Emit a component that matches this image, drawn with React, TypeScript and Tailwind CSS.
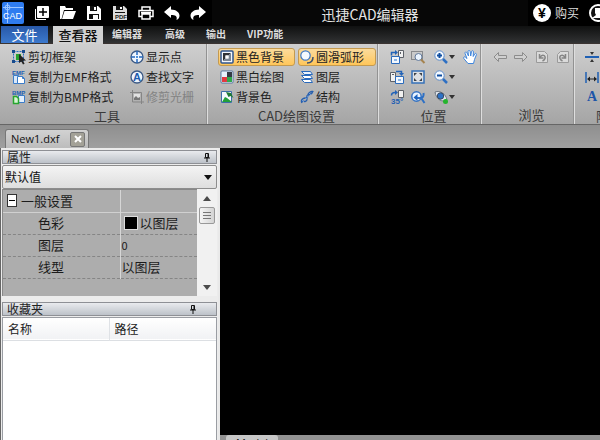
import type { ReactNode } from "react";

type IconProps = { children: ReactNode; className?: string };

function Icon({ children, className = "size-[14px]" }: IconProps) {
  return (
    <svg
      viewBox="0 0 14 14"
      fill="none"
      fontFamily="Liberation Sans, sans-serif"
      fontWeight="bold"
      className={`shrink-0 overflow-visible ${className}`}
      aria-hidden="true"
    >
      {children}
    </svg>
  );
}

const icons = {
  crop: (
    <Icon>
      <path d="M1.500 1.500h10v10h-10z" stroke="#2a6fc0" strokeDasharray="2 1" />
      <path d="M0 0h3v3H0zM10 0h3v3h-3zM0 10h3v3H0z" fill="#174a8c" />
      <path d="M4 4h5v6H4z" fill="#27a22c" />
      <path d="M7 4l7 6.500-3 .2 1.600 3-1.600.8-1.700-3L7 13z" fill="#222" />
    </Icon>
  ),
  emf: (
    <Icon>
      <text x="0" y="4.500" fontSize="6" fill="#1c5fb4">
        EMF
      </text>
      <path d="M1.500 5.500h5v8h-5z" fill="#d9e8fa" stroke="#3b7cc9" />
      <path d="M5.500 6.500h5l2 2v5h-7z" fill="#fff" stroke="#3b7cc9" />
      <path d="M10.500 6.500v2h2" stroke="#3b7cc9" />
    </Icon>
  ),
  bmp: (
    <Icon>
      <text x="0" y="4.500" fontSize="6" fill="#1c5fb4">
        BMP
      </text>
      <path d="M6.500 5.500h6v7h-6z" fill="#e3effc" stroke="#3b7cc9" />
      <path d="M1.500 6.500h3l2 2v5h-5z" fill="#d7f6d4" stroke="#28a62e" strokeWidth="1.500" />
    </Icon>
  ),
  points: (
    <Icon>
      <circle cx="7" cy="7" r="6" fill="#eef5fe" stroke="#3c5a86" strokeWidth="1.300" />
      <path d="M7 1v4M7 9v4M1 7h4M9 7h4" stroke="#2467bd" strokeWidth="1.500" />
      <path d="M6 6h2v2H6z" fill="#4d91dc" />
    </Icon>
  ),
  findText: (
    <Icon>
      <circle cx="7" cy="7" r="6" fill="#eef5fe" stroke="#3c5a86" strokeWidth="1.300" />
      <text x="7" y="11" textAnchor="middle" fontSize="11" fill="#1d5cae">
        A
      </text>
    </Icon>
  ),
  raster: (
    <Icon>
      <path d="M2.500 0v12H14M0 2.500h11.500V14" stroke="#858585" />
      <path d="M4 4h6v6H4z" fill="#e2e2e2" />
      <path d="M4 10V8l2-2 2 2 2-1v3z" fill="#777" />
    </Icon>
  ),
  blackBg: (
    <Icon>
      <rect x="1" y="1" width="12" height="12" rx="1" fill="#f4f7fb" stroke="#2f5590" strokeWidth="1.500" />
      <path d="M3 3h8L8.500 5.500h-3v3L3 11z" fill="#2f3136" />
      <path d="M11 3v8H3l2.500-2.500h3v-3z" fill="#7d8794" />
      <path d="M5.500 5.500h3v3h-3z" fill="#fff" />
    </Icon>
  ),
  blackWhite: (
    <Icon>
      <rect x="1" y="1" width="12" height="12" rx="1" fill="#fff" stroke="#52749f" />
      <path d="M7 2h5v5H7z" fill="#343b45" />
      <path d="M2 7h5v5H2z" fill="#e23a42" />
      <path d="M7 7h5v5H7z" fill="#31a94b" />
      <path d="M2 2h5v5H2z" fill="#e8f2fd" />
    </Icon>
  ),
  bgColor: (
    <Icon>
      <path d="M1.500 1.500h10v11h-10z" fill="#f2f7fd" stroke="#3d6ea8" />
      <path d="M2 12l3-5 2 1 5 4z" fill="#22a03a" />
      <path d="M6 2l5 1 2.500 5-3-2-2 1z" fill="#1f7a35" />
      <path d="M5 4.500l5 5" stroke="#fff" />
    </Icon>
  ),
  arc: (
    <Icon>
      <circle cx="5.500" cy="5.500" r="4.700" fill="#f5f9fe" stroke="#3f78c4" strokeWidth="1.200" />
      <path d="M13 7c0 3.500-2 6-6 6" stroke="#3a4f70" strokeWidth="1.500" />
    </Icon>
  ),
  layers: (
    <Icon>
      <path d="M1.500 9.500l3 3h8l-2-3z" fill="#fff" stroke="#2869bd" />
      <path d="M1.500 5.500l3 3h8l-2-3z" fill="#fff" stroke="#2869bd" />
      <path d="M1.500 1.500l3 3h8l-2-3z" fill="#e8f2fd" stroke="#2869bd" />
    </Icon>
  ),
  structure: (
    <Icon>
      <path d="M2 13c-2-4 2-5 4-5s1-3 3-5 4-2 4-1M1 10c4 3 6 1 6-1s-1-3 1-4 4 0 5-4" stroke="#275fae" strokeWidth="1.400" />
      <path d="M2 10l2 2M9 3l2 2M5 8l2 1M7 6l2 1" stroke="#6a9bd9" />
    </Icon>
  ),
  rotateLeft: (
    <Icon>
      <path d="M8.500.500h5v7h-5z" fill="#f1f1f1" stroke="#5d6168" />
      <path d="M10.500 2v2" stroke="#5d6168" />
      <path d="M1.500 6.500h8v7h-8z" fill="#f4f8fd" stroke="#2d6cbc" />
      <path d="M4 9h3v2H4z" fill="#8db6e7" />
      <path d="M1.500 5.500V2.500h4" stroke="#2263b8" strokeWidth="1.500" />
      <path d="M5 0l3 2.500L5 5z" fill="#2263b8" />
    </Icon>
  ),
  rotateRight: (
    <Icon>
      <path d="M.500 2.500h5v9h-5z" fill="#f1f1f1" stroke="#5d6168" />
      <path d="M2 4.500h2" stroke="#5d6168" />
      <path d="M5.500 6.500h8v7h-8z" fill="#f4f8fd" stroke="#2d6cbc" />
      <path d="M8 9h3v2H8z" fill="#8db6e7" />
      <path d="M6 1.500h5.500V4" stroke="#2263b8" strokeWidth="1.500" />
      <path d="M9 3h5l-2.500 3z" fill="#2263b8" />
    </Icon>
  ),
  rotateAngle: (
    <Icon>
      <path d="M8.500.500h5v7h-5z" fill="#f1f1f1" stroke="#5d6168" />
      <path d="M1.500 5.500C1.500 3.500 3 2.500 5 2.500" stroke="#2263b8" strokeWidth="1.500" />
      <path d="M5 0l3 2.500L5 5z" fill="#2263b8" />
      <text x="1" y="13.500" fontSize="8" fill="#1f5fb3">
        35°
      </text>
    </Icon>
  ),
  zoomWindow: (
    <Icon>
      <path d="M.500 1.500h11v8H.500z" stroke="#45494f" strokeDasharray="1 1" />
      <circle cx="7.500" cy="7" r="3.500" fill="#eaf4ff" stroke="#62799a" />
      <path d="M10 9.500l3.500 3.500" stroke="#a5834f" strokeWidth="2" />
    </Icon>
  ),
  fit: (
    <Icon>
      <rect x="1" y="1" width="12" height="12" fill="#dcdfe3" stroke="#3672b9" strokeWidth="1.500" />
      <path d="M3 3h3L3 6zM11 3v3L8 3zM3 11V8l3 3zM11 11H8l3-3z" fill="#3b4149" />
    </Icon>
  ),
  zoomBack: (
    <Icon>
      <circle cx="5.500" cy="6.500" r="4.700" fill="#eaf4ff" stroke="#3673c2" strokeWidth="1.500" />
      <path d="M10.500 8.500l3 4.500" stroke="#2d70c5" strokeWidth="2" />
      <path d="M5 8h4c3 0 4-2 3.500-5" stroke="#2d70c5" strokeWidth="2" />
      <path d="M6.500 4v7L2.500 7.500z" fill="#1c63bf" />
    </Icon>
  ),
  zoomIn: (
    <Icon>
      <circle cx="5.500" cy="5.500" r="4.700" fill="#f3f9ff" stroke="#5e8dca" />
      <path d="M3 5.500h5M5.500 3v5" stroke="#0f4da0" strokeWidth="2" />
      <path d="M9 9l4 4" stroke="#2d6fc3" strokeWidth="2.500" />
    </Icon>
  ),
  zoomOut: (
    <Icon>
      <circle cx="5.500" cy="5.500" r="4.700" fill="#f3f9ff" stroke="#5e8dca" />
      <path d="M3 5.500h5" stroke="#0f4da0" strokeWidth="2" />
      <path d="M9 9l4 4" stroke="#2d6fc3" strokeWidth="2.500" />
    </Icon>
  ),
  orbit: (
    <Icon>
      <path d="M1 2c5-2 11 2 12 8-5 3-11-1-12-8z" fill="#e4e9ef" stroke="#6e7680" />
      <circle cx="6.500" cy="6" r="3.200" fill="#2d72c6" stroke="#3c4c60" />
      <circle cx="11.500" cy="11.500" r="2.500" fill="#25b42d" />
    </Icon>
  ),
  hand: (
    <Icon>
      <path
        d="M5 13.500L.800 8.500c-.8-1.500 1-2.200 2-1L4 8.500 2 3.300c-.3-1.400 1.500-1.700 2-.4L5.500 6 5 1.500C5 .2 7 .2 7.200 1.500L7.700 6l.8-4.500c.3-1.200 2-1 1.900.3L10.200 6.500l1.600-2.700c.7-1 2-.2 1.600.9L11.500 9.500l-1 4z"
        fill="#fff"
        stroke="#3f86dd"
      />
    </Icon>
  ),
  back: (
    <Icon>
      <path d="M5.500 2.500L1 7l4.500 4.500v-3h8v-3h-8z" fill="#d0d0d0" stroke="#8c8c8c" />
    </Icon>
  ),
  forward: (
    <Icon>
      <path d="M8.500 2.500L13 7l-4.500 4.500v-3h-8v-3h8z" fill="#d0d0d0" stroke="#8c8c8c" />
    </Icon>
  ),
  pageBack: (
    <Icon>
      <path d="M1.500 1.500h8l3 3v8h-11z" fill="#dadada" stroke="#9a9a9a" />
      <path d="M4.500 4v4h4M5 7.500c2-4 6-2 5 1-.5 1.500-1.500 2-2.500 2.500" stroke="#858585" strokeWidth="1.500" />
    </Icon>
  ),
  pageForward: (
    <Icon>
      <path d="M12.500 1.500h-8l-3 3v8h11z" fill="#dadada" stroke="#9a9a9a" />
      <path d="M9.500 4v4h-4M9 7.500c-2-4-6-2-5 1 .5 1.500 1.500 2 2.500 2.500" stroke="#858585" strokeWidth="1.500" />
    </Icon>
  ),
  split: (
    <Icon>
      <path d="M0 7h14" stroke="#1f60b4" strokeWidth="2" />
      <path d="M5 2h4L7 5zM5 12h4L7 9z" fill="#333" />
    </Icon>
  ),
  distance: (
    <Icon>
      <path d="M1 2v11M13 2v11" stroke="#1f60b4" strokeWidth="1.500" />
      <path d="M3 9h8" stroke="#222" />
      <path d="M2 9l3-2.500v5zM12 9L9 6.500v5z" fill="#222" />
    </Icon>
  ),
};

function RibbonButton({
  icon,
  label,
  active,
  disabled,
}: {
  icon: ReactNode;
  label: string;
  active?: boolean;
  disabled?: boolean;
}) {
  return (
    <button
      disabled={disabled}
      className={`my-px flex h-[18px] items-center gap-[2px] rounded-[3px] border px-px text-xs leading-4 whitespace-nowrap ${
        active
          ? "border-[#c49a50] bg-linear-to-b from-[#fbdb9c] to-[#ffc658] text-[#222]"
          : "border-transparent text-[#222] disabled:text-[#838383]"
      }`}
    >
      {icon}
      {label}
    </button>
  );
}

function ToolButton({ icon, label, menu }: { icon: ReactNode; label: string; menu?: boolean }) {
  return (
    <button aria-label={label} className="flex h-5 items-center gap-px">
      {icon}
      {menu && (
        <svg viewBox="0 0 6 4" className="h-1 w-[6px]" aria-hidden="true">
          <path d="M0 0h6L3 4z" fill="#333" />
        </svg>
      )}
    </button>
  );
}

function Group({ title, className, children }: { title: string; className: string; children: ReactNode }) {
  return (
    <section
      className={`flex flex-col border-r border-r-[#dedede] pt-[3px] shadow-[inset_-1px_0_0_#929292] ${className}`}
    >
      <div className="h-[60px]">{children}</div>
      <h2 className="pl-[7px] text-center text-[13px] leading-[18px] whitespace-nowrap text-[#3a3a3a]">{title}</h2>
    </section>
  );
}

function Pin() {
  return (
    <svg viewBox="0 0 8 9" className="h-[9px] w-2" aria-hidden="true">
      <path d="M2.500.500h3v4h-3zM1 5h6M4 5v4M5 1v4" stroke="#111" fill="none" />
    </svg>
  );
}

function TitleBar() {
  return (
    <header className="flex h-[26px] shrink-0 items-center bg-[#070707] text-white">
      <div className="flex h-full w-[212px] shrink-0 items-center bg-black pl-[2px]">
        <svg viewBox="0 0 22 22" className="size-[22px]" aria-hidden="true">
          <rect width="22" height="22" rx="2" fill="#2f7cf0" />
          <path d="M1 5.500h20M5.500 1v20M3 5.500a2.500 2.500 0 105 0 2.500 2.500 0 10-5 0" stroke="#9cc5ff" fill="none" />
          <text x="1" y="17" fontSize="9" fill="#fff" fontFamily="Liberation Sans, sans-serif">
            CAD
          </text>
        </svg>
        <div className="ml-[10px] flex items-center gap-[10px]">
          <button aria-label="新建">
            <svg viewBox="0 0 16 16" className="size-4" fill="none">
              <rect x="3" y="1" width="12" height="12" rx="1" fill="#fff" />
              <path d="M1.500 4v10.500H12" stroke="#fff" />
              <path d="M9 3v8M5 7h8" stroke="#000" strokeWidth="1.500" />
            </svg>
          </button>
          <button aria-label="打开">
            <svg viewBox="0 0 16 16" className="size-4" fill="#fff">
              <path d="M0 14V1h5l1 2h7v2H4L1.500 14zM4.500 6H16l-3 8H2z" />
            </svg>
          </button>
          <button aria-label="保存">
            <svg viewBox="0 0 16 16" className="size-4">
              <path d="M1 1h11l3 3v11H1z" fill="#fff" />
              <path d="M4 1h7v5H4zM3 9h10v5H3z" fill="#111" />
              <path d="M8 2h2v3H8zM7 10h5v4H7z" fill="#fff" />
            </svg>
          </button>
          <button aria-label="保存为PDF">
            <svg viewBox="0 0 16 16" className="size-4">
              <path d="M1 1h11l3 3v11H1z" fill="#ddd" />
              <path d="M4 1h7v4H4zM3 7h10v1H3z" fill="#111" />
              <path d="M8 2h2v2H8z" fill="#fff" />
              <text x="3" y="14" fontSize="6" fontWeight="bold" fill="#222" fontFamily="Liberation Sans, sans-serif">
                PDF
              </text>
            </svg>
          </button>
          <button aria-label="打印">
            <svg viewBox="0 0 16 16" className="size-4" fill="none">
              <path d="M4 5V2h8v3M4 11.500H1V5.500h14v6h-3" stroke="#fff" strokeWidth="1.500" />
              <path d="M4 9h8v5H4zM3 7.500h10" stroke="#fff" strokeWidth="1.500" />
            </svg>
          </button>
          <button aria-label="撤销">
            <svg viewBox="0 0 16 16" className="size-4" fill="#fff">
              <path d="M0 7l7-6v3.500c5 0 8.500 3 8.500 6 0 2-1 3.500-3 4.500 1-4-1-5-5.500-5v3z" />
            </svg>
          </button>
          <button aria-label="重做">
            <svg viewBox="0 0 16 16" className="size-4" fill="#fff">
              <path d="M16 7L9 1v3.500c-5 0-8.500 3-8.500 6 0 2 1 3.500 3 4.500-1-4 1-5 5.500-5v3z" />
            </svg>
          </button>
        </div>
      </div>
      <h1 className="flex-1 pt-[2px] text-center text-sm leading-5 text-[#e4e4e4]">迅捷CAD编辑器</h1>
      <div className="flex h-full w-[72px] shrink-0 items-center overflow-hidden bg-black pl-[5px]">
        <button className="flex shrink-0 items-center gap-1 text-xs leading-4 text-[#ddd]">
          <svg viewBox="0 0 18 18" className="size-[18px]" aria-hidden="true">
            <circle cx="9" cy="9" r="9" fill="#fff" />
            <text
              x="9"
              y="14"
              textAnchor="middle"
              fontSize="14"
              fontWeight="bold"
              fill="#000"
              fontFamily="Liberation Sans, sans-serif"
            >
              ¥
            </text>
          </svg>
          购买
        </button>
        <button aria-label="账户" className="ml-[10px] shrink-0">
          <svg viewBox="0 0 18 18" className="size-[18px]">
            <circle cx="9" cy="9" r="8" fill="#111" stroke="#fff" strokeWidth="2" />
            <path d="M6 4h6v5l-1 2 4 3H3l4-3-1-2z" fill="#fff" />
          </svg>
        </button>
      </div>
    </header>
  );
}

function MenuTabs() {
  return (
    <nav className="flex h-[18px] shrink-0 items-start border-b border-[#3b3432] bg-linear-to-b from-[#101111] to-[#323334] pl-px text-[10px] leading-4 font-bold whitespace-nowrap text-[#ddd]">
      <button className="h-[17px] w-[47px] bg-linear-to-b from-[#2858a8] to-[#3c79cd] text-[13px] font-normal text-white">
        文件
      </button>
      <button className="ml-[5px] h-[18px] w-[50px] bg-[#d2d2d2] text-[13px] font-medium text-[#111]">查看器</button>
      <button className="ml-[9px]">编辑器</button>
      <button className="ml-[23px]">高级</button>
      <button className="ml-[21px]">输出</button>
      <button className="ml-[21px]">VIP功能</button>
    </nav>
  );
}

function Ribbon() {
  return (
    <div className="flex h-[81px] shrink-0 overflow-hidden border-b border-[#666] bg-linear-to-b from-[#cfcfcf] to-[#a5a5a5]">
      <Group title="工具" className="w-[208px] shrink-0">
        <div className="grid grid-cols-[118px_1fr] pl-[10px]">
          <RibbonButton icon={icons.crop} label="剪切框架" />
          <RibbonButton icon={icons.points} label="显示点" />
          <RibbonButton icon={icons.emf} label="复制为EMF格式" />
          <RibbonButton icon={icons.findText} label="查找文字" />
          <RibbonButton icon={icons.bmp} label="复制为BMP格式" />
          <RibbonButton icon={icons.raster} label="修剪光栅" disabled />
        </div>
      </Group>
      <Group title="CAD绘图设置" className="w-[171px] shrink-0">
        <div className="grid grid-cols-[77px_78px] gap-x-[3px] pl-[10px]">
          <RibbonButton icon={icons.blackBg} label="黑色背景" active />
          <RibbonButton icon={icons.arc} label="圆滑弧形" active />
          <RibbonButton icon={icons.blackWhite} label="黑白绘图" />
          <RibbonButton icon={icons.layers} label="图层" />
          <RibbonButton icon={icons.bgColor} label="背景色" />
          <RibbonButton icon={icons.structure} label="结构" />
        </div>
      </Group>
      <Group title="位置" className="w-[103px] shrink-0">
        <div className="grid grid-cols-[21px_23px_29px_14px] pl-[11px]">
          <ToolButton icon={icons.rotateLeft} label="向左旋转" />
          <ToolButton icon={icons.zoomWindow} label="窗口缩放" />
          <ToolButton icon={icons.zoomIn} label="放大" menu />
          <ToolButton icon={icons.hand} label="平移" />
          <ToolButton icon={icons.rotateRight} label="向右旋转" />
          <ToolButton icon={icons.fit} label="适合窗口" />
          <ToolButton icon={icons.zoomOut} label="缩小" menu />
          <span />
          <ToolButton icon={icons.rotateAngle} label="旋转35度" />
          <ToolButton icon={icons.zoomBack} label="上一视图" />
          <ToolButton icon={icons.orbit} label="三维视图" menu />
        </div>
      </Group>
      <Group title="浏览" className="w-[93px] shrink-0">
        <div className="flex gap-[7px] pl-[11px]">
          <ToolButton icon={icons.back} label="后退" />
          <ToolButton icon={icons.forward} label="前进" />
          <ToolButton icon={icons.pageBack} label="上一页" />
          <ToolButton icon={icons.pageForward} label="下一页" />
        </div>
      </Group>
      <section className="flex min-w-0 flex-1 flex-col overflow-hidden pt-[3px]">
        <div className="flex h-[60px] flex-col items-start pl-[10px]">
          <ToolButton icon={icons.split} label="分隔" />
          <ToolButton icon={icons.distance} label="距离" />
          <button
            aria-label="文本"
            className="h-5 w-[14px] text-center font-['Liberation_Serif',serif] text-sm leading-5 font-bold text-[#1c55a8]"
          >
            A
          </button>
        </div>
        <h2 className="pl-[21px] text-[13px] leading-[18px] whitespace-nowrap text-[#3a3a3a]">附</h2>
      </section>
    </div>
  );
}

function PanelHeader({ title, className }: { title: string; className: string }) {
  return (
    <div
      className={`flex h-[14px] shrink-0 items-center justify-between border border-[#8e9095] bg-linear-to-b from-[#e9ebee] to-[#bdc2c9] pl-1 ${className}`}
    >
      <h2 className="text-xs leading-3 text-[#222]">{title}</h2>
      <Pin />
    </div>
  );
}

const properties = [
  { name: "色彩", value: "以图层", swatch: true },
  { name: "图层", value: "0" },
  { name: "线型", value: "以图层" },
];

function PropertiesPanel() {
  return (
    <>
      <PanelHeader title="属性" className="pr-[5px]" />
      <div className="relative mt-px">
        <select
          aria-label="对象"
          className="block h-6 w-full appearance-none rounded-[2px] border border-[#8d8d8d] bg-linear-to-b from-[#f4f4f4] to-[#dedede] pl-[2px] text-xs text-[#111]"
        >
          <option>默认值</option>
        </select>
        <svg viewBox="0 0 8 5" className="pointer-events-none absolute top-[10px] right-[5px] h-[5px] w-2">
          <path d="M0 0h8L4 5z" fill="#111" />
        </svg>
      </div>
      <div className="flex h-[107px] shrink-0 bg-[#adadad]">
        <div className="min-w-0 flex-1 border-t border-l border-[#888]">
          <table className="w-full table-fixed border-collapse text-[13px] leading-5 text-[#1c1c1c]">
            <tbody>
              <tr className="h-[22px] border-b border-[#d0d0d0]">
                <th className="w-[117px] border-r border-[#d6d6d6] p-0 text-left font-normal">
                  <span className="flex items-center gap-1 pl-1">
                    <button
                      aria-label="折叠"
                      className="flex h-[13px] w-[10px] items-center justify-center border border-[#333] bg-white"
                    >
                      <span className="h-px w-[6px] bg-black" />
                    </button>
                    一般设置
                  </span>
                </th>
                <td />
              </tr>
              {properties.map((row) => (
                <tr key={row.name} className="h-[22px] border-b border-dashed border-[#858585]">
                  <th className="border-r border-solid border-r-[#d6d6d6] p-0 pl-[35px] text-left font-normal">
                    {row.name}
                  </th>
                  <td className="p-0 pl-px">
                    <span className="flex items-center gap-[2px]">
                      {row.swatch && <span className="ml-[2px] size-[14px] border border-[#ddd] bg-black" />}
                      {row.value === "0" ? <span className="text-[11px]">0</span> : row.value}
                    </span>
                  </td>
                </tr>
              ))}
            </tbody>
          </table>
        </div>
        <div className="flex w-5 flex-col items-center bg-[#f1f1f1]">
          <button aria-label="向上滚动" className="flex h-[18px] items-center">
            <svg viewBox="0 0 8 5" className="h-[5px] w-2">
              <path d="M4 0l4 5H0z" fill="#4b4b4b" />
            </svg>
          </button>
          <div className="flex h-[17px] w-4 flex-col items-center justify-center gap-[2px] rounded-[2px] border border-[#999] bg-linear-to-r from-[#f5f5f5] to-[#d4d4d4]">
            <span className="h-px w-2 bg-[#777]" />
            <span className="h-px w-2 bg-[#777]" />
            <span className="h-px w-2 bg-[#777]" />
          </div>
          <button aria-label="向下滚动" className="mt-auto flex h-[18px] items-center">
            <svg viewBox="0 0 8 5" className="h-[5px] w-2">
              <path d="M0 0h8L4 5z" fill="#4b4b4b" />
            </svg>
          </button>
        </div>
      </div>
    </>
  );
}

function FavoritesPanel() {
  return (
    <>
      <PanelHeader title="收藏夹" className="mt-[6px] pr-[19px]" />
      <div className="mt-px min-h-0 flex-1 border-t border-r border-l border-[#9a9da3] bg-white">
        <table className="w-full table-fixed border-collapse text-xs leading-5 text-[#222]">
          <thead>
            <tr className="h-[22px] border-b border-[#dcdfe3] bg-linear-to-b from-white to-[#f1f2f4]">
              <th className="w-[106px] border-r border-[#dfe2e6] p-0 pl-[5px] text-left font-normal">名称</th>
              <th className="p-0 pl-[5px] text-left font-normal">路径</th>
            </tr>
          </thead>
        </table>
      </div>
    </>
  );
}

export default function App() {
  return (
    <div className="flex h-screen flex-col overflow-hidden bg-[#9b9b9b] font-['Noto_Sans_CJK_SC',sans-serif]">
      <TitleBar />
      <MenuTabs />
      <Ribbon />
      <div className="flex h-[23px] shrink-0 items-end bg-linear-to-b from-[#8f8f8f] to-[#a0a0a0] pl-[5px]">
        <div className="flex h-[19px] w-[84px] items-center justify-between rounded-t-[3px] border border-b-0 border-[#777] bg-linear-to-b from-[#d2d2d2] to-[#bcbcbc] pr-[3px] pl-[5px]">
          <span className="font-['Open_Sans',sans-serif] text-[11px] leading-4 text-[#111]">New1.dxf</span>
          <button
            aria-label="关闭"
            className="flex size-[15px] items-center justify-center rounded-[2px] border border-[#777] bg-[#a3a197]"
          >
            <svg viewBox="0 0 8 8" className="size-2">
              <path d="M1 1l6 6M7 1L1 7" stroke="#fff" strokeWidth="2" />
            </svg>
          </button>
        </div>
      </div>
      <main className="flex min-h-0 flex-1">
        <aside className="flex w-[220px] shrink-0 flex-col border-r-2 border-l border-[#e9e9e9] border-l-[#666] bg-[#ececec] pt-[2px] pr-px pl-px">
          <PropertiesPanel />
          <FavoritesPanel />
        </aside>
        <div className="flex min-w-0 flex-1 flex-col bg-black">
          <div className="flex-1" />
          <div className="flex h-[5px] shrink-0 items-start overflow-hidden bg-[#929292] pl-[6px]">
            <button className="w-[52px] rounded-t-[3px] bg-[#c6c6c6] font-['Open_Sans',sans-serif] text-[11px] leading-4 text-[#222]">
              Model
            </button>
          </div>
        </div>
      </main>
    </div>
  );
}
